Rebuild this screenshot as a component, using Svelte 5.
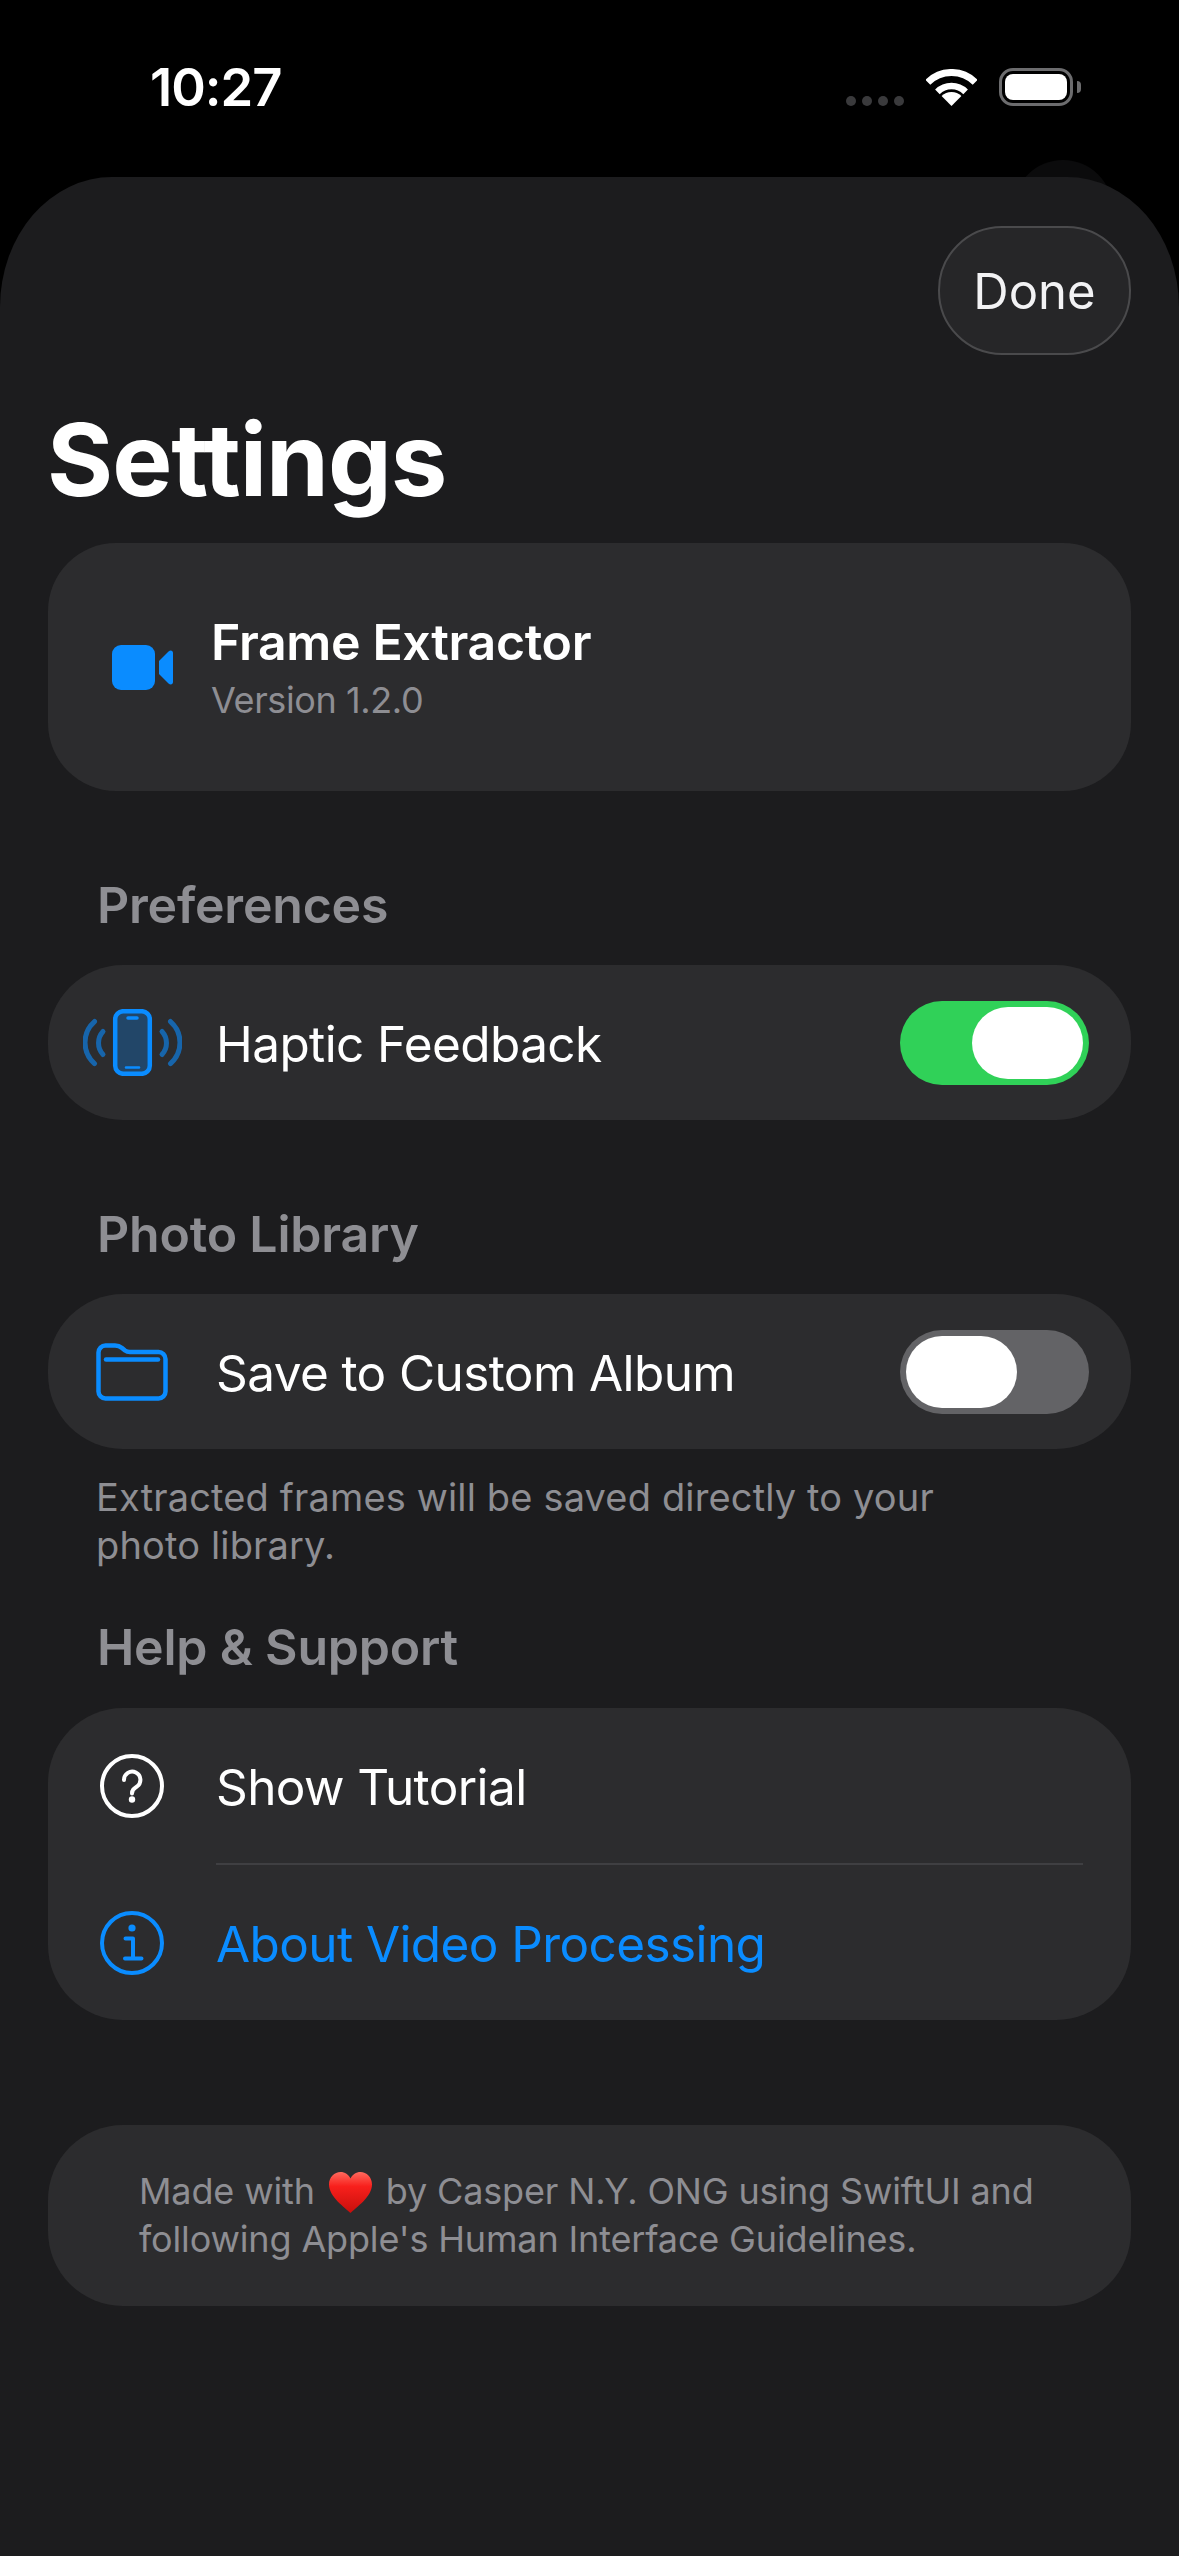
<script>
  let haptics = true;
  let customAlbum = false;
</script>

<div class="screen">
  <header class="status">
    <span class="time">10:27</span>
    <div class="status-icons">
      <div class="signal"><i></i><i></i><i></i><i></i></div>
      <svg class="wifi" width="51" height="37" viewBox="0 0 51 37" fill="none" stroke="#fff">
        <path d="M1.8 13.3A33.5 33.5 0 0 1 49.2 13.3" stroke-width="7" />
        <path d="M11.4 22.9A20 20 0 0 1 39.6 22.9" stroke-width="6.5" />
        <path d="M25.5 37L15.6 27.1A14 14 0 0 1 35.4 27.1Z" fill="#fff" stroke="none" />
      </svg>
      <div class="battery"><div class="level"></div></div>
      <div class="battery-tip"></div>
    </div>
  </header>

  <main class="sheet">
    <div class="toolbar">
      <button class="done">Done</button>
    </div>
    <h1>Settings</h1>

    <section class="card app">
      <svg width="61" height="45" viewBox="0 0 61 45" fill="#0a8cff">
        <rect width="43" height="45" rx="9" />
        <path d="M47 16L56.500 6.500C58.500 4.800 61 5.500 61 8V37C61 39.500 58.500 40.200 56.500 38.500L47 29Z" />
      </svg>
      <div>
        <div class="app-name">Frame Extractor</div>
        <div class="app-version">Version 1.2.0</div>
      </div>
    </section>

    <h2>Preferences</h2>
    <section class="card">
      <div class="row">
        <div class="icon">
          <svg width="99" height="67" viewBox="0 0 99 67" fill="none" stroke="#0a8cff" stroke-linecap="round">
            <g stroke-width="5" opacity="0.6">
              <path d="M11.500 12.500A28 28 0 0 0 11.500 54.500" />
              <path d="M20 22.500A17 17 0 0 0 20 45.500" />
              <path d="M87.500 12.500A28 28 0 0 1 87.500 54.500" />
              <path d="M79 22.500A17 17 0 0 1 79 45.500" />
            </g>
            <rect x="32.200" y="2.200" width="34.600" height="62.600" rx="8" fill="#0a8cff" fill-opacity="0.28" stroke-width="4.500" />
            <path d="M45 9H54" stroke-width="3.500" />
            <path d="M43 58.500H56" stroke-width="2.500" />
          </svg>
        </div>
        <span class="label">Haptic Feedback</span>
        <button class="toggle" class:on={haptics} on:click={() => (haptics = !haptics)}><span class="knob"></span></button>
      </div>
    </section>

    <h2>Photo Library</h2>
    <section class="card">
      <div class="row">
        <div class="icon">
          <svg width="72" height="58" viewBox="0 0 72 58" fill="none" stroke="#0a8cff" stroke-width="4.500" stroke-linecap="round">
            <path d="M2.500 48V9.500A7 7 0 0 1 9.500 2.500H19Q23 2.500 26 5L29 7.500Q31 9 34 9H62.500A7 7 0 0 1 69.500 16V48.500A7 7 0 0 1 62.500 55.500H9.500A7 7 0 0 1 2.500 48.500Z" />
            <path d="M10 16.500H62" />
          </svg>
        </div>
        <span class="label">Save to Custom Album</span>
        <button class="toggle" class:on={customAlbum} on:click={() => (customAlbum = !customAlbum)}><span class="knob"></span></button>
      </div>
    </section>
    <p class="note">Extracted frames will be saved directly to your photo library.</p>

    <h2 class="help-title">Help &amp; Support</h2>
    <section class="card">
      <div class="row">
        <div class="icon">
          <svg width="64" height="64" viewBox="0 0 64 64" fill="none" stroke="#fff" stroke-width="4">
            <circle cx="32" cy="32" r="30" />
            <path d="M24 26A8.200 8.200 0 1 1 37 32.500C34 34.500 32 35.500 32 39.500" stroke-linecap="round" />
            <circle cx="32" cy="45.500" r="3.200" fill="#fff" stroke="none" />
          </svg>
        </div>
        <span class="label">Show Tutorial</span>
      </div>
      <div class="divider"></div>
      <div class="row">
        <div class="icon">
          <svg width="64" height="64" viewBox="0 0 64 64" fill="none" stroke="#0a8cff" stroke-width="4">
            <circle cx="32" cy="32" r="30" />
            <circle cx="32" cy="17" r="3.600" fill="#0a8cff" stroke="none" />
            <path d="M25.500 27.500H33V47M25 47.500H41.500" stroke-linecap="round" stroke-linejoin="round" />
          </svg>
        </div>
        <span class="label link">About Video Processing</span>
      </div>
    </section>

    <section class="card credits">
      <p>
        Made with
        <svg class="heart" width="43" height="41" viewBox="0 0 43 41">
          <defs>
            <linearGradient id="heart-fill" x1="0" y1="0" x2="0" y2="1">
              <stop offset="0" stop-color="#ff6a5e" />
              <stop offset="0.35" stop-color="#f8201c" />
              <stop offset="1" stop-color="#c80f0c" />
            </linearGradient>
          </defs>
          <path d="M21.500 41C16 35.500 0 25 0 12.500C0 5 5.500 0 11.500 0C16 0 19.500 2.500 21.500 6.500C23.500 2.500 27 0 31.500 0C37.500 0 43 5 43 12.500C43 25 27 35.500 21.500 41Z" fill="url(#heart-fill)" />
        </svg>
        by Casper N.Y. ONG using SwiftUI and<br />following Apple's Human Interface Guidelines.
      </p>
    </section>
  </main>
</div>

<style>
  :global(body) {
    margin: 0;
    background: #000;
  }

  .screen {
    width: 1179px;
    height: 2556px;
    display: flex;
    flex-direction: column;
    overflow: hidden;
    font-family: Inter, "Liberation Sans", sans-serif;
    color: #fff;
  }

  .status {
    height: 177px;
    flex-shrink: 0;
    display: flex;
    justify-content: space-between;
    align-items: flex-start;
    padding: 55px 98px 0 150px;
    box-sizing: border-box;
    position: relative;
  }

  /* dark blob peeking out behind the sheet */
  .status::after {
    content: "";
    position: absolute;
    right: 66px;
    top: 160px;
    width: 100px;
    height: 100px;
    border-radius: 50%;
    background: #0b0b0c;
  }

  .time {
    font-size: 52.500px;
    line-height: 64px;
    font-weight: 600;
    letter-spacing: -1px;
  }

  .status-icons {
    display: flex;
    align-items: flex-end;
    padding-top: 13px;
  }

  .signal {
    display: flex;
    gap: 6px;
    margin-right: 22px;
  }

  .signal i {
    width: 10px;
    height: 10px;
    border-radius: 50%;
    background: #3a3a3c;
  }

  .wifi {
    display: block;
    margin-right: 22px;
  }

  .battery {
    width: 74px;
    height: 38px;
    box-sizing: border-box;
    border: 3px solid #6c6c6e;
    border-radius: 14px;
    padding: 3px;
  }

  .level {
    height: 100%;
    background: #fff;
    border-radius: 8px;
  }

  .battery-tip {
    width: 4px;
    height: 12px;
    margin: 0 0 13px 4px;
    background: #6c6c6e;
    border-radius: 0 4px 4px 0;
  }

  .sheet {
    flex: 1;
    position: relative;
    z-index: 1;
    background: #1c1c1e;
    border-radius: 112px 112px 0 0 / 130px 130px 0 0;
    padding: 49px 48px 0;
  }

  .toolbar {
    display: flex;
    justify-content: flex-end;
  }

  .done {
    width: 193px;
    height: 129px;
    border: 2.500px solid #4a4a4c;
    border-radius: 64px;
    background: #262628;
    color: #f2f2f4;
    font: 400 49px Inter, sans-serif;
    padding: 2px 0 0;
  }

  h1 {
    margin: 0 0 0 -1px;
    height: 188px;
    box-sizing: border-box;
    padding-top: 44px;
    font-size: 101px;
    line-height: 120px;
    font-weight: 700;
    letter-spacing: -1px;
  }

  .card {
    background: #2c2c2e;
    border-radius: 75px;
  }

  .app {
    height: 248px;
    border-radius: 68px;
    display: flex;
    align-items: center;
    gap: 38px;
    padding-left: 64px;
  }

  .app-name {
    font-size: 50px;
    line-height: 60px;
    font-weight: 600;
    letter-spacing: -0.350px;
  }

  .app-version {
    margin-top: 6px;
    font-size: 36px;
    line-height: 44px;
    letter-spacing: -0.400px;
    color: #8e8e93;
  }

  h2 {
    margin: 84px 0 30px 49px;
    font-size: 50px;
    line-height: 60px;
    font-weight: 600;
    letter-spacing: -0.200px;
    color: #8e8e93;
  }

  .help-title {
    margin-top: 48px;
    margin-bottom: 31px;
  }

  .row {
    height: 155px;
    display: flex;
    align-items: center;
    padding-right: 42px;
  }

  .icon {
    width: 168px;
    flex-shrink: 0;
    display: flex;
    justify-content: center;
  }

  .label {
    flex: 1;
    padding-top: 2px;
    font-size: 49.500px;
    letter-spacing: -0.600px;
  }

  .link {
    color: #0a8cff;
  }

  .divider {
    height: 2px;
    margin: 0 48px 0 168px;
    background: #3f3f42;
  }

  .toggle {
    width: 189px;
    height: 84px;
    padding: 6px;
    border: 0;
    border-radius: 42px;
    background: #636366;
    display: flex;
    justify-content: flex-start;
  }

  .toggle.on {
    background: #30d158;
    justify-content: flex-end;
  }

  .knob {
    width: 111px;
    height: 72px;
    border-radius: 36px;
    background: #fff;
  }

  .note {
    margin: 24px 48px 0;
    max-width: 880px;
    font-size: 38px;
    line-height: 48px;
    letter-spacing: 0.150px;
    color: #8e8e93;
  }

  .credits {
    margin-top: 105px;
    height: 181px;
    box-sizing: border-box;
    padding: 42px 0 0 91px;
  }

  .credits p {
    margin: 0;
    font-size: 36px;
    line-height: 48px;
    letter-spacing: -0.150px;
    color: #8e8e93;
  }

  .heart {
    vertical-align: -9px;
    margin: 0 4px;
  }
</style>
